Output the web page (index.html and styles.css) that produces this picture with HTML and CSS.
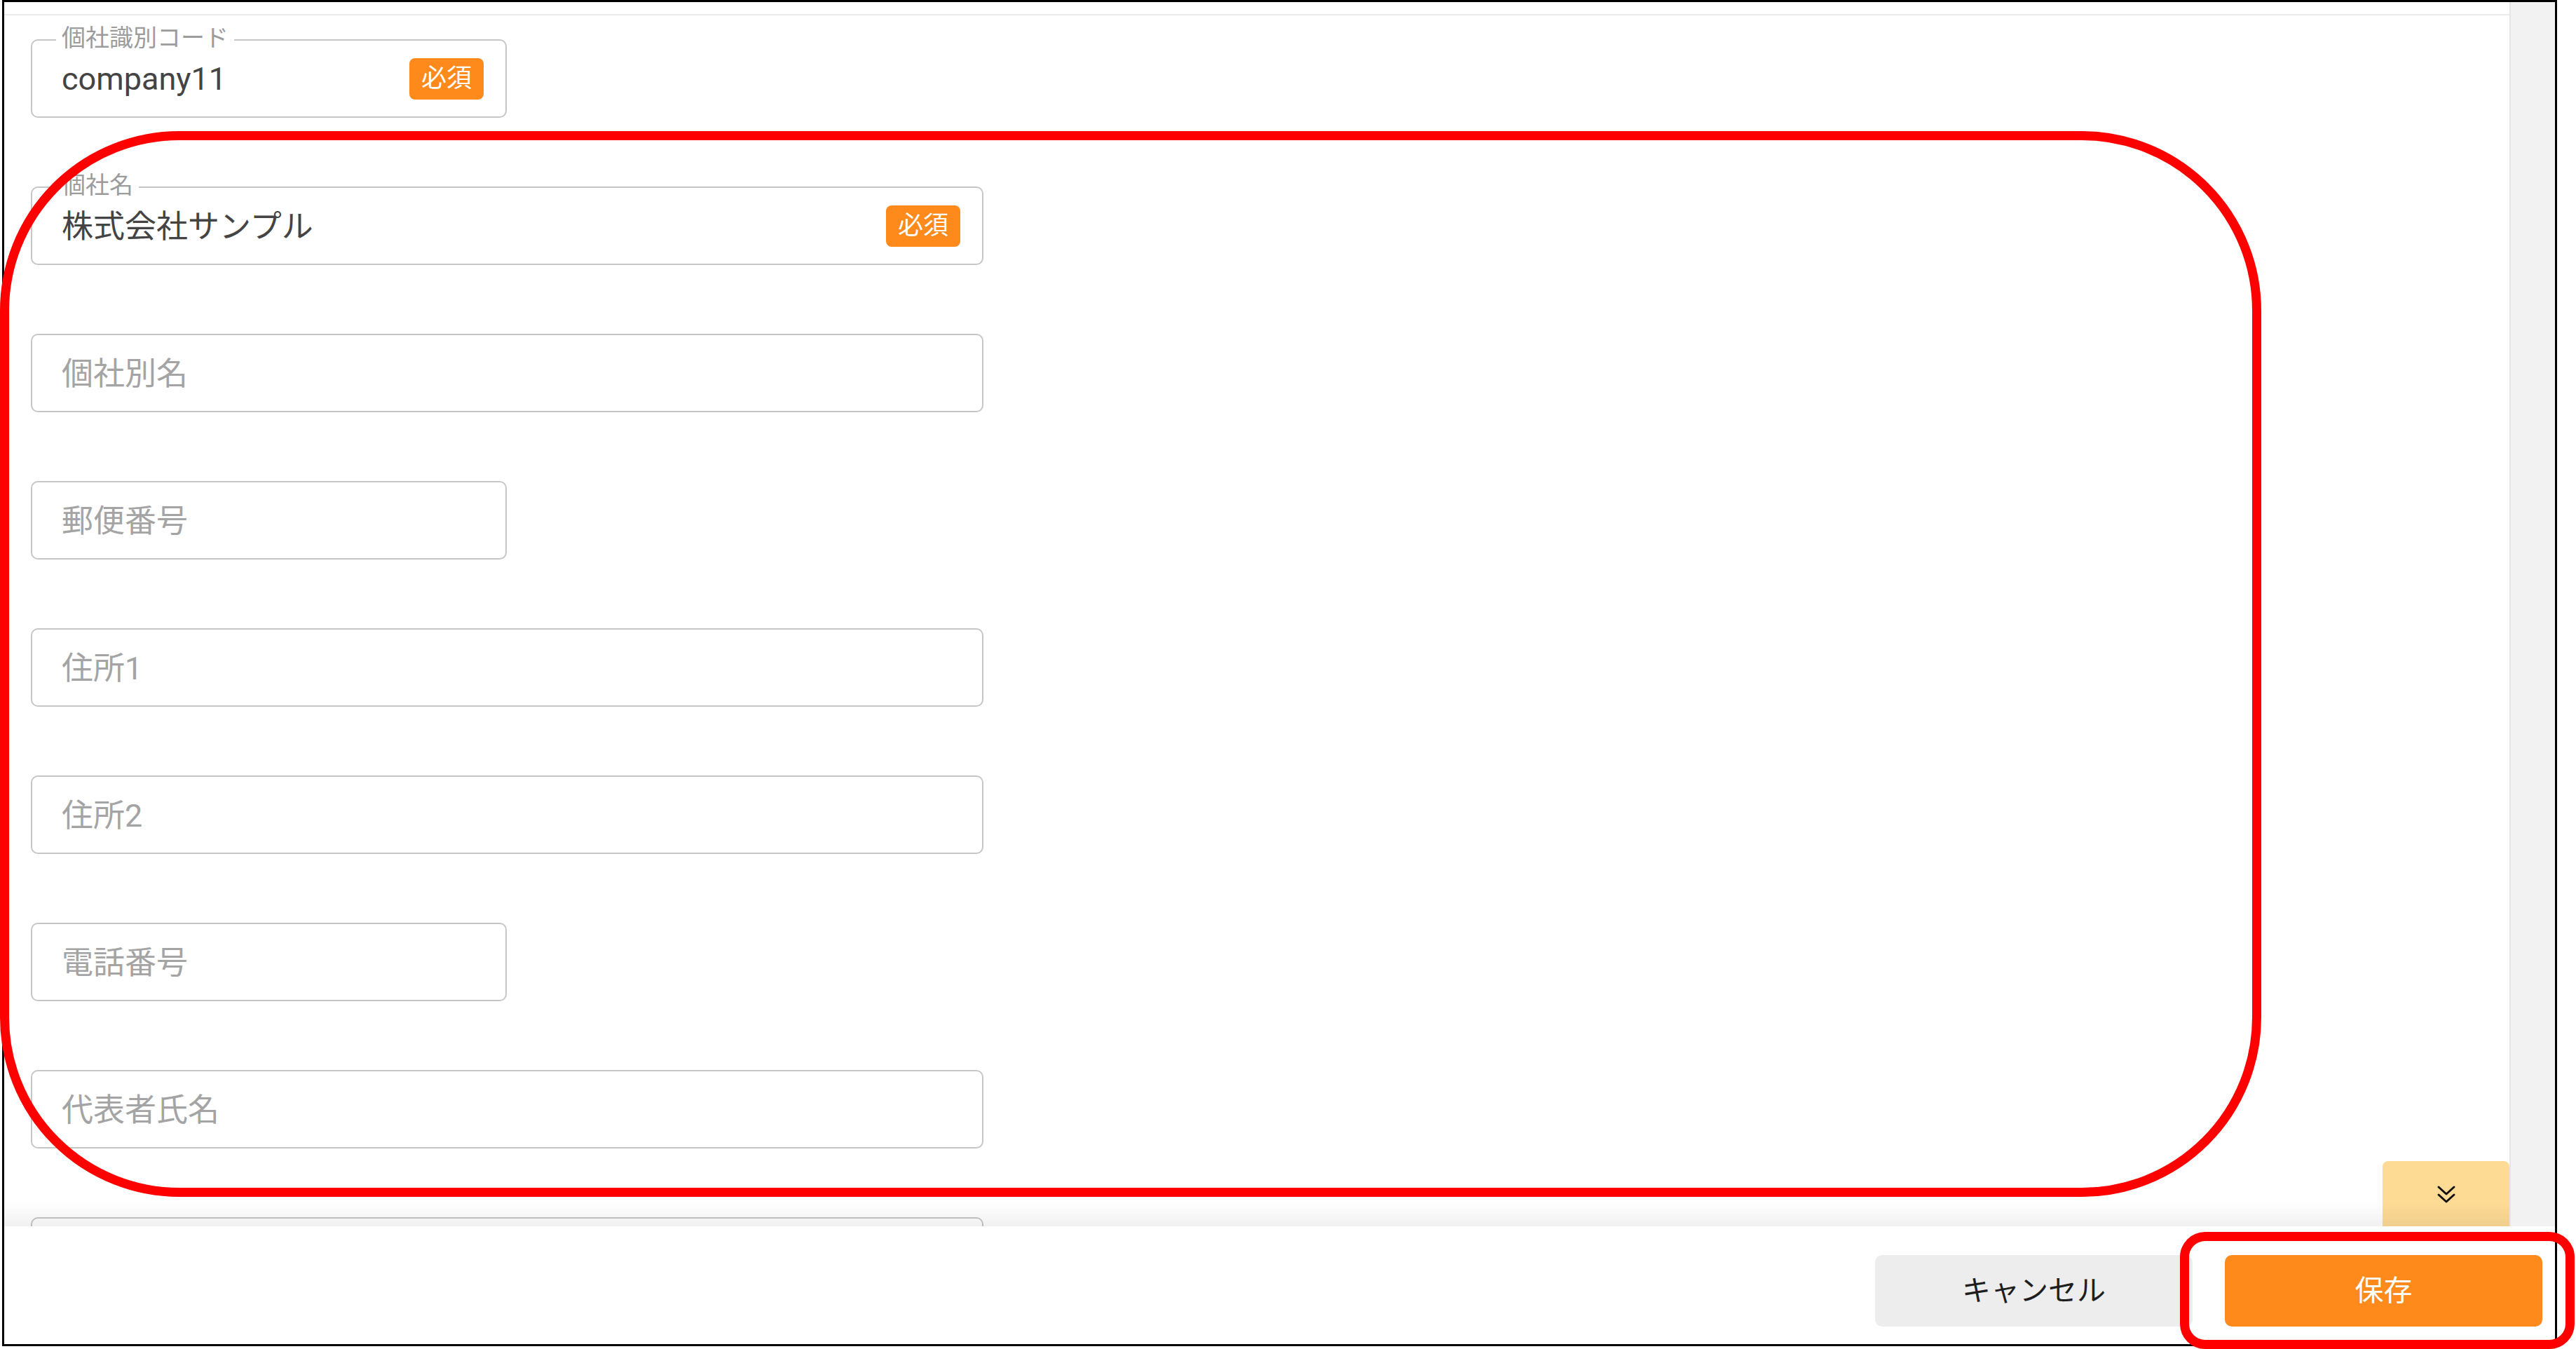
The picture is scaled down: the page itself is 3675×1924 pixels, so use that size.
FILE: index.html
```html
<!DOCTYPE html>
<html lang="ja">
<head>
<meta charset="utf-8">
<title>個社編集</title>
<link rel="stylesheet" href="styles.css">
</head>
<body>
<div class="frame">
  <div class="main">
    <div class="content">
      <div class="topbar"></div>
      <div class="scroll">
        <div class="field narrow">
          <span class="field-label">個社識別コード</span>
          <span class="value">company11</span>
          <span class="badge">必須</span>
        </div>
        <div class="field wide">
          <span class="field-label">個社名</span>
          <span class="value value-ja">株式会社サンプル</span>
          <span class="badge">必須</span>
        </div>
        <div class="field wide"><span class="placeholder">個社別名</span></div>
        <div class="field narrow"><span class="placeholder">郵便番号</span></div>
        <div class="field wide"><span class="placeholder">住所1</span></div>
        <div class="field wide"><span class="placeholder">住所2</span></div>
        <div class="field narrow"><span class="placeholder">電話番号</span></div>
        <div class="field wide"><span class="placeholder">代表者氏名</span></div>
        <div class="field wide"></div>
      </div>
      <button class="scroll-down" type="button" aria-label="下へ">
        <svg width="28" height="28" viewBox="0 0 28 28" fill="none" stroke="#111" stroke-width="3" stroke-linecap="round" stroke-linejoin="round">
          <path d="M3 3 L14 13 L25 3 M3 14 L14 24 L25 14"/>
        </svg>
      </button>
    </div>
    <div class="scrollbar"></div>
  </div>
  <div class="footer">
    <button class="btn btn-cancel" type="button">キャンセル</button>
    <button class="btn btn-save" type="button">保存</button>
  </div>
</div>
<div class="mark mark-form"></div>
<div class="mark mark-save"></div>
</body>
</html>
```

FILE: styles.css
```css
html, body {
  margin: 0;
  padding: 0;
  background: #ffffff;
}

body {
  position: relative;
  width: 3675px;
  height: 1924px;
  overflow: hidden;
  font-family: Roboto, "Noto Sans CJK JP", sans-serif;
}

.frame {
  box-sizing: border-box;
  margin-left: 3px;
  width: 3645px;
  height: 1920px;
  border: 3px solid #000;
  display: flex;
  flex-direction: column;
  background: #fff;
}

.main {
  flex: 0 0 1746px;
  display: flex;
  min-height: 0;
}

.content {
  position: relative;
  flex: 1;
  display: flex;
  flex-direction: column;
  overflow: hidden;
}

.content::after {
  content: "";
  position: absolute;
  left: 0;
  right: 0;
  bottom: 0;
  height: 34px;
  background: linear-gradient(to bottom, rgba(0, 0, 0, 0), rgba(0, 0, 0, 0.06));
  pointer-events: none;
}

.topbar {
  flex: 0 0 17px;
  border-bottom: 2px solid #ececec;
}

.scroll {
  flex: 1;
  overflow: hidden;
  padding: 34px 0 0 38px;
}

.field {
  position: relative;
  box-sizing: border-box;
  height: 112px;
  margin-bottom: 98px;
  border: 2px solid #c6c6c6;
  border-radius: 10px;
  display: flex;
  align-items: center;
  padding: 0 31px 0 42px;
  background: #fff;
}

.narrow { width: 679px; }
.wide { width: 1359px; }

.field-label {
  position: absolute;
  left: 34px;
  top: -21px;
  padding: 0 8px;
  background: #fff;
  font-size: 34px;
  line-height: 34px;
  color: #9c9c9c;
  white-space: nowrap;
}

.value {
  flex: 1;
  font-size: 45px;
  color: #444444;
  white-space: nowrap;
}

.value-ja {
  margin-top: -5px;
}

.placeholder {
  font-size: 45px;
  color: #a4a4a4;
  white-space: nowrap;
  margin-top: -5px;
}

.badge {
  flex: 0 0 auto;
  height: 59px;
  line-height: 59px;
  padding: 0 17px;
  border-radius: 8px;
  background: #fd8a1a;
  color: #fff;
  font-size: 36px;
}

.scroll-down {
  position: absolute;
  right: 0;
  bottom: 0;
  width: 181px;
  height: 93px;
  border: none;
  padding: 0;
  border-radius: 8px 8px 0 0;
  background: #fedb95;
  display: flex;
  align-items: center;
  justify-content: center;
}

.scroll-down svg {
  display: block;
  margin-top: 2px;
}

.scrollbar {
  flex: 0 0 63px;
  background: #f2f2f2;
  border-left: 2px solid #e6e6e6;
}

.footer {
  flex: 1;
  display: flex;
  justify-content: flex-end;
  align-items: flex-start;
  gap: 46px;
  padding: 41px 18px 0 0;
  background: #fff;
}

.btn {
  width: 453px;
  height: 102px;
  border: none;
  border-radius: 10px;
  font-family: "Noto Sans CJK JP", sans-serif;
  font-size: 41px;
  padding: 0 0 8px 0;
}

.btn-cancel {
  background: #ededed;
  color: #1e1e1e;
}

.btn-save {
  background: #fd8a1a;
  color: #fff;
}

.mark {
  position: absolute;
  box-sizing: border-box;
  border: 13px solid #ff0000;
  pointer-events: none;
}

.mark-form {
  left: 0;
  top: 187px;
  width: 3226px;
  height: 1520px;
  border-radius: 256px;
}

.mark-save {
  left: 3110px;
  top: 1757px;
  width: 563px;
  height: 167px;
  border-radius: 36px;
}
```
